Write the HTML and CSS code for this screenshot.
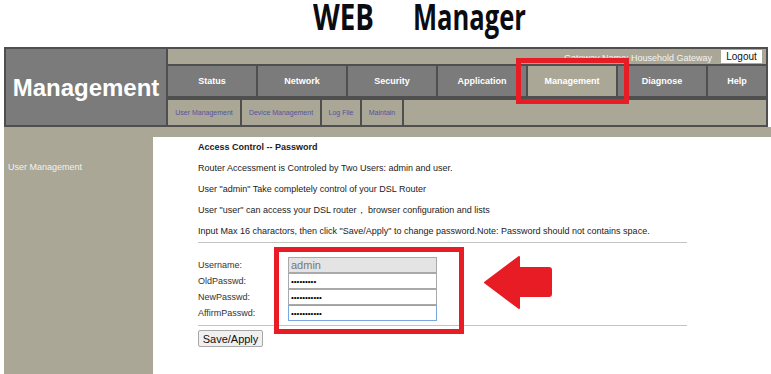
FILE: index.html
```html
<!DOCTYPE html>
<html>
<head>
<meta charset="utf-8">
<link rel="stylesheet" href="styles.css">
</head>
<body>
<div class="title"><span class="t1">WEB</span><span class="t2">Manager</span></div>
<div class="header">
  <div class="brand">Management</div>
  <div class="nav">
    <div class="topbar"><span class="gw">Gateway Name: Household Gateway</span><span class="logout">Logout</span></div>
    <div class="tabs">
      <div class="tab">Status</div>
      <div class="tab">Network</div>
      <div class="tab">Security</div>
      <div class="tab">Application</div>
      <div class="tab active">Management</div>
      <div class="tab">Diagnose</div>
      <div class="tab help">Help</div>
    </div>
    <div class="subnav">
      <div class="sub w1">User Management</div>
      <div class="sub w2">Device Management</div>
      <div class="sub w3">Log File</div>
      <div class="sub w4">Maintain</div>
      <div class="sub fill"></div>
    </div>
  </div>
</div>
<div class="main">
  <div class="side">User Management</div>
  <div class="content">
    <div class="line head">Access Control -- Password</div>
    <div class="line">Router Accessment is Controled by Two Users: admin and user.</div>
    <div class="line">User "admin" Take completely control of your DSL Router</div>
    <div class="line">User "user" can access your DSL router， browser configuration and lists</div>
    <div class="line">Input Max 16 charactors, then click "Save/Apply" to change password.Note: Password should not contains space.</div>
    <div class="rule"></div>
    <div class="form">
      <div class="row"><span class="lbl">Username:</span><input class="inp ro" type="text" value="admin" readonly></div>
      <div class="row"><span class="lbl">OldPasswd:</span><input class="inp" type="password" value="123456789"></div>
      <div class="row"><span class="lbl">NewPasswd:</span><input class="inp" type="password" value="12345678901"></div>
      <div class="row"><span class="lbl">AffirmPasswd:</span><input class="inp focus" type="password" value="12345678901"></div>
    </div>
    <div class="rule r2"></div>
    <button class="btn">Save/Apply</button>
  </div>
</div>
<div class="mark mark-tab"></div>
<div class="mark mark-form"></div>
<svg class="arrow" width="68" height="53" viewBox="-1 -1 68 53"><path d="M0 25.5 L34 0 L34 11 L64 11 Q66 11 66 13 L66 37 Q66 39 64 39 L34 39 L34 51 Z" fill="#e81c24" stroke="#e81c24" stroke-width="2" stroke-linejoin="round"/></svg>
</body>
</html>
```
FILE: styles.css
```css
* { box-sizing: border-box; }
body {
  margin: 0;
  width: 771px;
  height: 374px;
  overflow: hidden;
  position: relative;
  background: #fff;
  font-family: "Liberation Sans", Arial, sans-serif;
}
.title {
  height: 47px;
  display: flex;
  align-items: flex-start;
  padding-left: 313px;
  gap: 21px;
  font-family: "Open Sans", sans-serif;
  font-weight: 700;
  font-size: 36px;
  line-height: 34px;
  color: #0b0b12;
}
.title span {
  display: inline-block;
  transform-origin: left center;
}
.t1 { transform: scaleX(0.77); }
.t2 { transform: scaleX(0.71); }
.header {
  margin-left: 4px;
  width: 764px;
  height: 80px;
  border: 2px solid #4f4f4f;
  background: #4f4f4f;
  display: flex;
}
.brand {
  flex: 0 0 160px;
  margin-right: 2px;
  background: #7b7b7b;
  color: #fff;
  font-weight: 700;
  font-size: 24px;
  display: flex;
  align-items: center;
  justify-content: center;
  padding-top: 2px;
}
.nav {
  flex: 1;
  min-width: 0;
  display: flex;
  flex-direction: column;
}
.topbar {
  height: 15px;
  background: #aaa797;
  display: flex;
  justify-content: flex-end;
  align-items: center;
  padding-right: 4px;
}
.gw {
  color: #f4f4f4;
  font-size: 9px;
  margin-right: 9px;
  margin-top: 3px;
  white-space: nowrap;
}
.logout {
  background: #fff;
  color: #111;
  font-size: 10px;
  height: 13px;
  width: 41px;
  display: flex;
  align-items: center;
  justify-content: center;
}
.tabs {
  margin-top: 2px;
  height: 30px;
  display: flex;
  gap: 2px;
}
.tab {
  flex: 0 0 88px;
  background: #7b7b7b;
  color: #fff;
  font-weight: 700;
  font-size: 9px;
  display: flex;
  align-items: center;
  justify-content: center;
}
.tab.active { background: #aaa797; }
.tab.help { flex: 1 1 0; min-width: 0; }
.subnav {
  margin-top: 4px;
  height: 25px;
  display: flex;
  gap: 2px;
}
.sub {
  background: #aaa797;
  color: #54549c;
  font-size: 7px;
  display: flex;
  align-items: center;
  justify-content: center;
  white-space: nowrap;
}
.w1 { flex: 0 0 72px; }
.w2 { flex: 0 0 78px; }
.w3 { flex: 0 0 38px; }
.w4 { flex: 0 0 40px; }
.fill { flex: 1 1 0; }
.main {
  margin-left: 4px;
  height: 247px;
  background: #aaa797;
  padding-top: 10px;
  display: flex;
}
.side {
  flex: 0 0 149px;
  padding: 20px 0 0 4px;
  line-height: 21px;
  font-size: 9px;
  color: #f2f2f2;
}
.content {
  flex: 1;
  background: #fff;
  padding-left: 45px;
}
.line {
  height: 21px;
  line-height: 20px;
  font-size: 9px;
  color: #222;
  white-space: nowrap;
}
.line.head { font-weight: 700; }
.rule {
  width: 489px;
  height: 1px;
  background: #c4c4c4;
}
.form {
  padding-top: 14px;
  padding-bottom: 4px;
}
.row {
  display: flex;
  align-items: center;
  height: 16px;
}
.lbl {
  width: 90px;
  font-size: 9px;
  color: #333;
}
.inp {
  width: 149px;
  height: 16px;
  margin: 0;
  padding: 0 2px;
  border: 1px solid #a9a9a9;
  font-family: "Liberation Sans", Arial, sans-serif;
  font-size: 8px;
  color: #000;
  background: #fff;
  outline: none;
}
.inp.ro {
  background: #e4e4e4;
  color: #777;
  font-size: 11px;
}
.inp.focus { border-color: #7aa7e0; }
.btn {
  margin-top: 4px;
  width: 65px;
  height: 17px;
  padding: 0;
  font-family: "Liberation Sans", Arial, sans-serif;
  font-size: 11px;
  color: #111;
  background: #f0f0f0;
  border: 1px solid #a8a8a8;
  border-radius: 2px;
}
.mark {
  position: absolute;
  border: 5px solid #e81c24;
}
.mark-tab {
  left: 516px;
  top: 58px;
  width: 113px;
  height: 46px;
}
.mark-form {
  left: 274px;
  top: 247px;
  width: 190px;
  height: 87px;
}
.arrow {
  position: absolute;
  left: 484px;
  top: 256px;
}
```
